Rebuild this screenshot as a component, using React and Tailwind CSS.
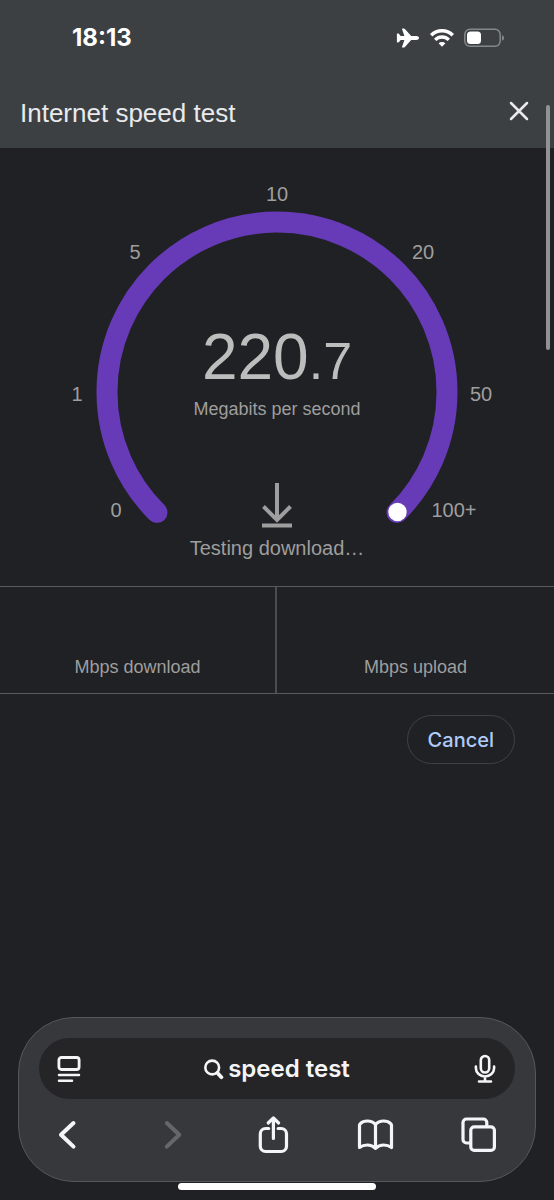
import React from "react";

const ticks = [
  { label: "0", x: 59, y: 341 },
  { label: "1", x: 20, y: 225 },
  { label: "5", x: 78, y: 83 },
  { label: "10", x: 220, y: 25 },
  { label: "20", x: 366, y: 83 },
  { label: "50", x: 424, y: 225 },
  { label: "100+", x: 397, y: 341 },
];

const stats = ["Mbps download", "Mbps upload"];

function StatusBar() {
  return (
    <div className="flex h-[76px] items-center justify-between pl-[72px] pr-[49px] font-['Inter',sans-serif] text-white">
      <span className="text-[24px] font-bold leading-7">18:13</span>
      <div className="flex items-center gap-[10px]">
        {/* Airplane mode */}
        <svg width="24" height="20" viewBox="0 0 24 20" fill="currentColor" aria-hidden="true">
          <path d="M23 10c0 1.200-1.300 1.900-2.800 1.900h-5L8.900 18.900c-.4.500-.8.700-1.400.7h-1c-.4 0-.6-.3-.5-.7L8.400 11.900H4.700L3 14.100c-.2.300-.5.400-.8.400h-.8c-.3 0-.5-.2-.5-.5V6c0-.3.200-.5.500-.5h.8c.3 0 .6.100.8.400l1.700 2.200h3.700L6 1.100C5.900.7 6.100.4 6.500.4h1c.6 0 1 .2 1.400.7l6.300 7h5C21.700 8.100 23 8.800 23 10z" />
        </svg>
        {/* Wi-Fi */}
        <svg width="24" height="18" viewBox="0 0 24 18" fill="none" stroke="currentColor" strokeWidth="3.400" aria-hidden="true">
          <path d="M1.200 6.300a15.200 15.200 0 0 1 21.600 0" />
          <path d="M5.200 10.900a9.500 9.500 0 0 1 13.600 0" />
          <path d="M12 17.700l-3.400-3.400a4.800 4.800 0 0 1 6.800 0z" fill="currentColor" stroke="none" />
        </svg>
        {/* Battery */}
        <svg width="41" height="20" viewBox="0 0 41 20" fill="none" aria-hidden="true">
          <rect x="0.8" y="1.300" width="35.400" height="17" rx="5.200" stroke="#85888a" strokeWidth="1.500" />
          <path d="M38 7.200c1.300.4 2 1.400 2 2.700s-.7 2.300-2 2.700z" fill="#85888a" />
          <rect x="3" y="3.500" width="14" height="12.600" rx="3.500" fill="#fff" />
        </svg>
      </div>
    </div>
  );
}

function Gauge() {
  return (
    <div className="grid justify-center pt-7">
      <svg
        className="col-start-1 row-start-1"
        width="440"
        height="360"
        viewBox="0 0 440 360"
        aria-hidden="true"
      >
        <path
          d="M100 336.500A170 170 0 1 1 340 336.500"
          fill="none"
          stroke="#673ab7"
          strokeWidth="21"
          strokeLinecap="round"
        />
        <circle cx="340.500" cy="336" r="9.200" fill="#fff" />
        {ticks.map((tick) => (
          <text key={tick.label} x={tick.x} y={tick.y} textAnchor="middle" fontSize="20" fill="#9e9e9e">
            {tick.label}
          </text>
        ))}
      </svg>
      <div className="col-start-1 row-start-1 flex flex-col items-center pt-[149px] text-[#9e9e9e]">
        <p className="text-[64px] leading-[64px] text-[#bdbdbd]">
          220<span className="text-[52px]">.7</span>
        </p>
        <p className="mt-1 text-[18px] leading-6">Megabits per second</p>
        <svg className="mt-[61px]" width="30" height="46" viewBox="0 0 30 46" fill="none" stroke="currentColor" strokeWidth="4" aria-hidden="true">
          <path d="M15 1v36M1.500 24.500 15 38l13.500-13.500M0 43.500h30" />
        </svg>
        <p className="mt-2 text-[20px] leading-6">Testing download…</p>
      </div>
    </div>
  );
}

function BrowserBar() {
  return (
    <div className="mx-[18px] rounded-[56px] border border-[#56575b] bg-[#37383b] pb-[22px] pt-5 text-[#f5f5f7]">
      <form
        className="mx-5 flex h-[61px] items-center justify-between rounded-full bg-[#252528] px-[18px] font-['Inter',sans-serif]"
        onSubmit={(e) => e.preventDefault()}
      >
        <button type="button" aria-label="Page menu">
          <svg width="24" height="28" viewBox="0 0 24 28" fill="none" stroke="currentColor" strokeWidth="2.800" strokeLinecap="round">
            <rect x="1.900" y="2.500" width="20.200" height="12" rx="2.500" />
            <path d="M2 20h20M2 25.800h13" strokeWidth="2.500" />
          </svg>
        </button>
        <label className="flex items-center gap-1">
          <svg width="20" height="22" viewBox="0 0 20 22" fill="none" stroke="currentColor" strokeLinecap="round" aria-hidden="true">
            <circle cx="8.200" cy="9.500" r="6.900" strokeWidth="2.600" />
            <path d="M13.500 15l3.900 4.200" strokeWidth="3.800" />
          </svg>
          <input
            type="text"
            aria-label="Search or enter website name"
            defaultValue="speed test"
            className="field-sizing-content bg-transparent text-[24px] font-semibold leading-7 outline-none"
          />
        </label>
        <button type="button" aria-label="Voice search">
          <svg width="24" height="30" viewBox="0 0 24 30" fill="none" stroke="currentColor" strokeWidth="2.600" strokeLinecap="round">
            <rect x="7.800" y="2" width="8.400" height="16.500" rx="4.200" />
            <path d="M2.900 12.500v1.700a9.100 8.300 0 0 0 18.200 0v-1.700M12 22.500v5M6 27.500h12" />
          </svg>
        </button>
      </form>
      <nav className="mt-3 flex h-12 items-center justify-between pl-[26px] pr-[34px]">
        <button type="button" aria-label="Back" className="flex w-11 justify-center">
          <svg width="20" height="32" viewBox="0 0 20 32" fill="none" stroke="currentColor" strokeWidth="4" strokeLinecap="round" strokeLinejoin="round">
            <path d="M16.500 4 4 15.800l12.500 11.800" />
          </svg>
        </button>
        <button type="button" aria-label="Forward" disabled className="flex w-11 justify-center text-[#66676b]">
          <svg width="26" height="32" viewBox="0 0 26 32" fill="none" stroke="currentColor" strokeWidth="4" strokeLinecap="round" strokeLinejoin="round">
            <path d="M9.800 4 22.300 15.800 9.800 27.600" />
          </svg>
        </button>
        <button type="button" aria-label="Share" className="flex w-11 justify-center">
          <svg width="32" height="42" viewBox="0 0 32 42" fill="none" stroke="currentColor" strokeWidth="3.200" strokeLinecap="round" strokeLinejoin="round">
            <path d="M11.700 14.500H8.600a5.300 5.300 0 0 0-5.300 5.300v12.400a5.300 5.300 0 0 0 5.300 5.300h15.600a5.300 5.300 0 0 0 5.300-5.300V19.800a5.300 5.300 0 0 0-5.300-5.300h-3.100" />
            <path d="M16.400 24.500V4.200M11.200 9l5.200-5 5.200 5" />
          </svg>
        </button>
        <button type="button" aria-label="Bookmarks" className="flex w-11 justify-center">
          <svg width="38" height="34" viewBox="0 0 38 34" fill="none" stroke="currentColor" strokeWidth="3.200" strokeLinejoin="round">
            <path d="M18.500 6.500C16.200 3.800 13.400 3 10.400 3 7.400 3 4.800 4 3.100 5.800 2.700 6.200 2.500 6.600 2.500 7.200V29.500C4.800 27.800 7.400 27 10.400 27c3 0 5.800 1 8.100 3.300C20.800 28 23.600 27 26.600 27c3 0 5.600.8 7.900 2.500V7.200c0-.6-.2-1-.6-1.400C32.200 4 29.600 3 26.600 3c-3 0-5.800.8-8.100 3.500zV30" />
          </svg>
        </button>
        <button type="button" aria-label="Tabs" className="flex w-11 justify-center">
          <svg width="36" height="36" viewBox="0 0 36 36" fill="none" stroke="currentColor" strokeWidth="3.200" strokeLinejoin="round">
            <rect x="9.800" y="9.800" width="23.600" height="23.600" rx="3.500" />
            <path d="M9.800 26H5.500A3.500 3.500 0 0 1 2 22.500V5.500A3.500 3.500 0 0 1 5.500 2h16.800a3.500 3.500 0 0 1 3.500 3.500v4.300" />
          </svg>
        </button>
      </nav>
    </div>
  );
}

export default function App() {
  return (
    <div className="relative flex min-h-screen flex-col bg-[#202124] font-['Liberation_Sans',Arial,sans-serif]">
      <header className="bg-[#3c4043]">
        <StatusBar />
        <div className="flex h-[72px] items-center justify-between pl-5 pr-6 text-[#e8eaed]">
          <h1 className="pt-[2px] text-[26px] leading-8">Internet speed test</h1>
          <button type="button" aria-label="Close">
            <svg width="22" height="22" viewBox="0 0 22 22" fill="none" stroke="currentColor" strokeWidth="2.500" strokeLinecap="round">
              <path d="M3 2l16 16M19 2 3 18" />
            </svg>
          </button>
        </div>
      </header>

      <main>
        <Gauge />
        <div className="mt-[26px] grid grid-cols-2 divide-x-2 divide-[#4b4c4f] border-y border-[#58595c]">
          {stats.map((stat) => (
            <div key={stat} className="flex h-[106px] items-end justify-center pb-[14px] text-[18px] leading-6 text-[#9e9e9e]">
              {stat}
            </div>
          ))}
        </div>
        <div className="flex justify-end pr-[39px] pt-[21px]">
          <button
            type="button"
            className="h-[49px] rounded-full border border-[#3f4145] px-5 font-['Inter',sans-serif] text-[20px] font-medium leading-6 text-[#aecbfa]"
          >
            Cancel
          </button>
        </div>
      </main>

      <footer className="mt-auto pb-[10px]">
        <BrowserBar />
        {/* Home indicator */}
        <div className="mx-auto mt-px h-[7px] w-[198px] rounded-full bg-white" />
      </footer>

      {/* Scroll thumb */}
      <div className="absolute right-1 top-[105px] h-[245px] w-1 rounded-full bg-[#919296]" />
    </div>
  );
}
